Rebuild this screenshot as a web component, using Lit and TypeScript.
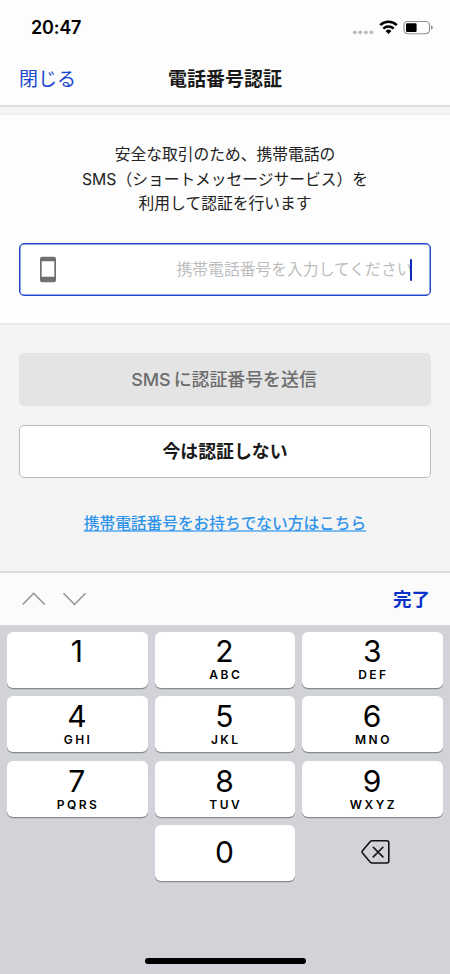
import { LitElement, html, css, nothing } from "lit";
import { customElement, property } from "lit/decorators.js";

const KEYS: Array<[string, string]> = [
  ["1", ""],
  ["2", "ABC"],
  ["3", "DEF"],
  ["4", "GHI"],
  ["5", "JKL"],
  ["6", "MNO"],
  ["7", "PQRS"],
  ["8", "TUV"],
  ["9", "WXYZ"],
];

@customElement("status-bar")
class StatusBar extends LitElement {
  static styles = css`
    :host {
      display: flex;
      box-sizing: border-box;
      height: 54px;
      padding: 0 17px 0 31px;
      justify-content: space-between;
      align-items: center;
    }
    .time {
      font-size: 18px;
      font-weight: 600;
      line-height: 24px;
      letter-spacing: -0.2px;
      padding-top: 1px;
    }
    .icons {
      display: block;
    }
  `;
  render() {
    return html`
      <span class="time">20:47</span>
      <svg class="icons" width="82" height="20" viewBox="351 17 82 20">
        <g fill="#bcbcbe">
          <circle cx="354.8" cy="32.3" r="1.9" />
          <circle cx="360.3" cy="32.3" r="1.9" />
          <circle cx="365.9" cy="32.3" r="1.9" />
          <circle cx="371.4" cy="32.3" r="1.9" />
        </g>
        <g fill="none" stroke="#000" stroke-width="2.5">
          <path d="M380.2 25.2a12 12 0 0 1 16.6 0" />
          <path d="M383.3 28.6a7.6 7.6 0 0 1 10.4 0" />
        </g>
        <path d="M388.5 34l-2.900-3a4.200 4.200 0 0 1 5.800 0z" fill="#000" />
        <rect x="404" y="21.5" width="25.5" height="12.2" rx="3.6" fill="none" stroke="#8e8e90" stroke-width="1.1" />
        <rect x="406" y="23.3" width="10.6" height="8.6" rx="1.2" fill="#000" />
        <path d="M431 25.400c2.400.6 2.400 3.800 0 4.400z" fill="#8e8e90" />
      </svg>
    `;
  }
}

@customElement("phone-field")
class PhoneField extends LitElement {
  static styles = css`
    :host {
      display: flex;
      box-sizing: border-box;
      height: 53px;
      border: 1px solid #2148c8;
      box-shadow: inset 0 0 0 0.5px #2148c8;
      border-radius: 5px;
      background: #fff;
      align-items: center;
      justify-content: space-between;
      padding: 0 18px 0 19px;
    }
    .entry {
      display: flex;
      align-items: center;
    }
    .hint {
      font-size: 15.8px;
      line-height: 24px;
      color: #bdbdbd;
      white-space: nowrap;
      margin-right: -3px;
    }
    .caret {
      width: 2.5px;
      height: 22px;
      border-radius: 1px;
      background: #0c2bb8;
    }
  `;
  render() {
    return html`
      <svg width="18" height="27" viewBox="0 0 18 27">
        <path
          fill="#707070"
          fill-rule="evenodd"
          d="M3 .7h12a2 2 0 0 1 2 2v21.600a2 2 0 0 1-2 2H3a2 2 0 0 1-2-2V2.700a2 2 0 0 1 2-2zM2.700 5.200v15.600h12.600V5.200z"
        />
      </svg>
      <span class="entry"><span class="hint">携帯電話番号を入力してください</span><span class="caret"></span></span>
    `;
  }
}

@customElement("pad-key")
class PadKey extends LitElement {
  @property() digit = "";
  @property() letters = "";
  @property({ type: Boolean }) centered = false;
  static styles = css`
    :host {
      display: block;
      height: 56px;
    }
    .key {
      display: flex;
      flex-direction: column;
      align-items: center;
      box-sizing: border-box;
      height: 56px;
      padding-top: var(--key-inset, 3px);
      border-radius: 6px;
      background: #fff;
      box-shadow: 0 1.2px 0 #898a8e;
    }
    .centered {
      padding-top: 11px;
    }
    .digit {
      font-size: 30px;
      line-height: 33px;
      font-weight: 400;
      margin-left: -1px;
    }
    .letters {
      font-size: 12px;
      line-height: 13px;
      font-weight: 600;
      letter-spacing: 2.5px;
      margin-right: -1.5px;
    }
  `;
  render() {
    return html`<div class="key ${this.centered ? "centered" : ""}">
      <span class="digit">${this.digit}</span>
      ${this.letters ? html`<span class="letters">${this.letters}</span>` : nothing}
    </div>`;
  }
}

@customElement("app-root")
class AppRoot extends LitElement {
  static styles = css`
    :host {
      display: flex;
      flex-direction: column;
      width: 450px;
      height: 974px;
      overflow: hidden;
      background: #f4f4f4;
      color: #000;
      font-family: Inter, "Noto Sans CJK JP", sans-serif;
    }
    .top {
      background: #fdfdfd;
      height: 105px;
      border-bottom: 2px solid #dedede;
    }
    .nav {
      display: grid;
      grid-template-columns: 1fr auto 1fr;
      align-items: center;
      height: 52px;
      padding: 0 19px;
      font-size: 19px;
      line-height: 28px;
    }
    .close {
      color: #1a47cf;
    }
    .title {
      font-weight: 700;
      color: #1a1a1a;
    }
    .card {
      box-sizing: border-box;
      height: 211px;
      margin-top: 7px;
      padding: 28px 19px 0;
      border-top: 1px solid #ececec;
      border-bottom: 2px solid #ebebeb;
      background: #fdfdfd;
    }
    .intro {
      margin: 0 0 26px;
      text-align: center;
      font-size: 15.75px;
      line-height: 24.700px;
      color: #222;
      white-space: nowrap;
    }
    .actions {
      display: flex;
      flex-direction: column;
      padding: 28px 19px 0;
      height: 218px;
    }
    .button {
      display: flex;
      box-sizing: border-box;
      height: 53px;
      align-items: center;
      justify-content: center;
      border-radius: 5px;
      font-size: 17.9px;
      line-height: 26px;
    }
    .send {
      background: #e4e4e4;
      color: #6c6c6c;
      font-weight: 500;
      padding: 1px 2px 0 0;
    }
    .latin {
      margin-right: 3px;
    }
    .later {
      margin-top: 19px;
      background: #fff;
      border: 1px solid #bebebe;
      color: #1a1a1a;
      font-weight: 700;
    }
    .link {
      align-self: center;
      margin-top: 34px;
      font-size: 15.700px;
      line-height: 24px;
      font-weight: 500;
      color: #2f93ea;
      text-decoration: underline;
      text-decoration-color: #7cbcf2;
      text-decoration-thickness: 2px;
      text-underline-offset: 1px;
      text-decoration-skip-ink: none;
    }
    .toolbar {
      display: flex;
      box-sizing: border-box;
      height: 54px;
      align-items: center;
      justify-content: space-between;
      padding: 0 20px 0 22px;
      border-top: 2px solid #dcdcdc;
      background: #fbfbfb;
    }
    .done {
      font-size: 18.5px;
      line-height: 28px;
      font-weight: 700;
      color: #0a32c8;
    }
    .keyboard {
      display: flex;
      flex: 1;
      flex-direction: column;
      align-items: center;
      background: #d1d3d9;
      padding: 7px 7px 0;
    }
    .pad {
      display: grid;
      width: 100%;
      grid-template-columns: repeat(3, 1fr);
      gap: 8.400px 7px;
    }
    .pad pad-key:nth-child(n + 4) {
      --key-inset: 4px;
    }
    .erase {
      grid-column: 3;
      display: flex;
      align-items: center;
      justify-content: center;
      height: 53px;
      padding-left: 6px;
    }
    .zero {
      grid-column: 2;
    }
    .home {
      width: 161px;
      height: 6px;
      margin-top: auto;
      margin-bottom: 10px;
      border-radius: 3px;
      background: #000;
    }
  `;
  render() {
    return html`
      <div class="top">
        <status-bar></status-bar>
        <div class="nav">
          <span class="close">閉じる</span>
          <span class="title">電話番号認証</span>
        </div>
      </div>
      <div class="card">
        <p class="intro">
          安全な取引のため、携帯電話の<br />SMS（ショートメッセージサービス）を<br />利用して認証を行います
        </p>
        <phone-field></phone-field>
      </div>
      <div class="actions">
        <div class="button send"><span class="latin">SMS</span>に認証番号を送信</div>
        <div class="button later">今は認証しない</div>
        <span class="link">携帯電話番号をお持ちでない方はこちら</span>
      </div>
      <div class="toolbar">
        <svg width="65" height="16" viewBox="0 0 65 16" fill="none" stroke="#929292" stroke-width="1.5">
          <path d="M.7 13.500L11.700 2.300l11 11.200M41.500 2.300l11 11.200 11-11.200" />
        </svg>
        <span class="done">完了</span>
      </div>
      <div class="keyboard">
        <div class="pad">
          ${KEYS.map(([digit, letters]) => html`<pad-key .digit=${digit} .letters=${letters}></pad-key>`)}
          <pad-key class="zero" .digit=${"0"} .centered=${true}></pad-key>
          <div class="erase">
            <svg width="30" height="26" viewBox="0 0 30 26" fill="none" stroke="#111" stroke-width="1.6" stroke-linejoin="round" stroke-linecap="round">
              <path d="M11 1.800h14.800a2 2 0 0 1 2 2v18.200a2 2 0 0 1-2 2H11q-1 0-1.700-.7L1.700 14.200q-1.100-1.300 0-2.600L9.300 2.500Q10 1.800 11 1.800zM12.300 8.300l9.600 9.600M21.900 8.300l-9.600 9.600" />
            </svg>
          </div>
        </div>
        <div class="home"></div>
      </div>
    `;
  }
}
